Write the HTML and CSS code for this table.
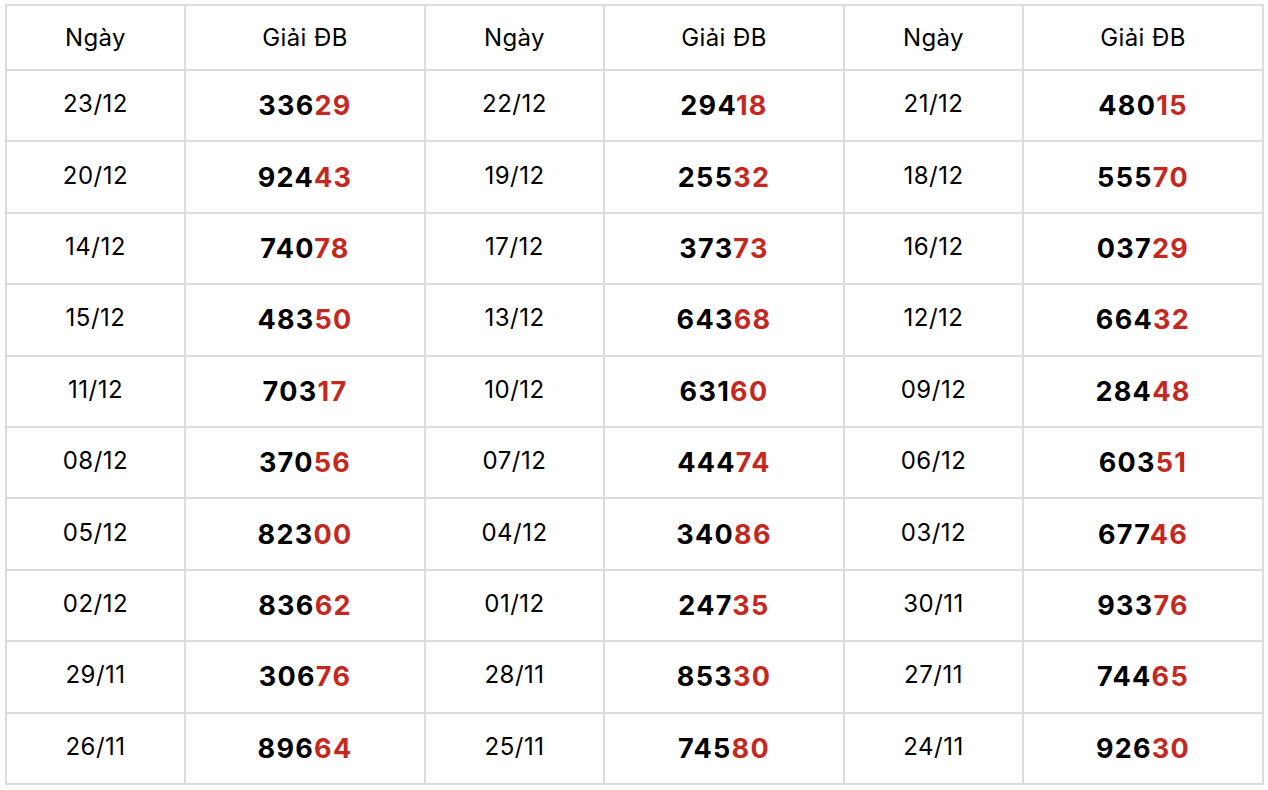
FILE: index.html
```html
<!DOCTYPE html>
<html lang="vi">
<head>
<meta charset="utf-8">
<title>Giải ĐB</title>
<link rel="stylesheet" href="styles.css">
</head>
<body>
<div class="wrap">
<table class="results">
<colgroup>
<col class="c-date"><col class="c-prize"><col class="c-date"><col class="c-prize"><col class="c-date"><col class="c-prize">
</colgroup>
<thead>
<tr><th>Ngày</th><th>Giải ĐB</th><th>Ngày</th><th>Giải ĐB</th><th>Ngày</th><th>Giải ĐB</th></tr>
</thead>
<tbody>
<tr><td class="date">23/12</td><td class="num">336<span class="tail">29</span></td><td class="date">22/12</td><td class="num">294<span class="tail">18</span></td><td class="date">21/12</td><td class="num">480<span class="tail">15</span></td></tr>
<tr><td class="date">20/12</td><td class="num">924<span class="tail">43</span></td><td class="date">19/12</td><td class="num">255<span class="tail">32</span></td><td class="date">18/12</td><td class="num">555<span class="tail">70</span></td></tr>
<tr><td class="date">14/12</td><td class="num">740<span class="tail">78</span></td><td class="date">17/12</td><td class="num">373<span class="tail">73</span></td><td class="date">16/12</td><td class="num">037<span class="tail">29</span></td></tr>
<tr><td class="date">15/12</td><td class="num">483<span class="tail">50</span></td><td class="date">13/12</td><td class="num">643<span class="tail">68</span></td><td class="date">12/12</td><td class="num">664<span class="tail">32</span></td></tr>
<tr><td class="date">11/12</td><td class="num">703<span class="tail">17</span></td><td class="date">10/12</td><td class="num">631<span class="tail">60</span></td><td class="date">09/12</td><td class="num">284<span class="tail">48</span></td></tr>
<tr><td class="date">08/12</td><td class="num">370<span class="tail">56</span></td><td class="date">07/12</td><td class="num">444<span class="tail">74</span></td><td class="date">06/12</td><td class="num">603<span class="tail">51</span></td></tr>
<tr><td class="date">05/12</td><td class="num">823<span class="tail">00</span></td><td class="date">04/12</td><td class="num">340<span class="tail">86</span></td><td class="date">03/12</td><td class="num">677<span class="tail">46</span></td></tr>
<tr><td class="date">02/12</td><td class="num">836<span class="tail">62</span></td><td class="date">01/12</td><td class="num">247<span class="tail">35</span></td><td class="date">30/11</td><td class="num">933<span class="tail">76</span></td></tr>
<tr><td class="date">29/11</td><td class="num">306<span class="tail">76</span></td><td class="date">28/11</td><td class="num">853<span class="tail">30</span></td><td class="date">27/11</td><td class="num">744<span class="tail">65</span></td></tr>
<tr><td class="date">26/11</td><td class="num">896<span class="tail">64</span></td><td class="date">25/11</td><td class="num">745<span class="tail">80</span></td><td class="date">24/11</td><td class="num">926<span class="tail">30</span></td></tr>
</tbody>
</table>
</div>
</body>
</html>
```
FILE: styles.css
```css
html, body {
  margin: 0;
  padding: 0;
  background: #fff;
}
.wrap {
  padding: 4px 0 0 5px;
}
.results {
  width: 1256px;
  border-collapse: collapse;
  font-family: Inter, "Noto Sans", sans-serif;
  color: #000;
  table-layout: fixed;
}
.c-date { width: 179px; }
.c-prize { width: 240px; }
.results th,
.results td {
  border: 2px solid #dcdcdc;
  text-align: center;
  vertical-align: middle;
  padding: 0;
}
.results th {
  height: 63px;
  font-size: 24px;
  font-weight: 400;
  letter-spacing: 0.4px;
}
.results td {
  height: 69.4px;
}
.results td.date {
  height: 65.4px;
  font-size: 24px;
  font-weight: 400;
  letter-spacing: 0.5px;
  padding-bottom: 4px;
}
.num {
  font-size: 27px;
  font-weight: 700;
  letter-spacing: 1.3px;
}
.tail {
  color: #c3291f;
}
```
